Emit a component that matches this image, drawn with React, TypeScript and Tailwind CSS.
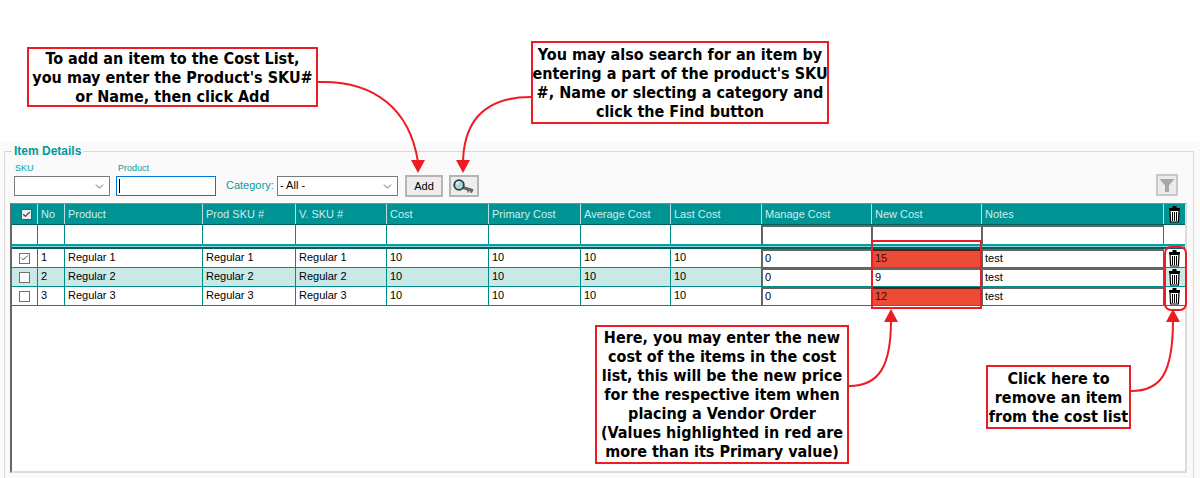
import { Check, ChevronDown } from "lucide-react";

const cols = "grid grid-cols-[25px_27px_138px_93px_91px_102px_92px_90px_91px_110px_110px_182px_23px]";
const headers = ["No", "Product", "Prod SKU #", "V. SKU #", "Cost", "Primary Cost", "Average Cost", "Last Cost", "Manage Cost", "New Cost", "Notes"];
const rows = [
  { no: 1, name: "Regular 1", next: "15", checked: true, over: true },
  { no: 2, name: "Regular 2", next: "9", checked: false, over: false },
  { no: 3, name: "Regular 3", next: "12", checked: false, over: true },
];

function TrashIcon() {
  return (
    <svg width="13" height="17" viewBox="0 0 13 17" className="block">
      <path d="M4.500 1h4M1 3h11" stroke="#000" strokeWidth="2" fill="none" />
      <path d="M2 4.500h9l-.6 11.500H2.600z" fill="#fff" stroke="#000" strokeWidth="1.200" />
      <path d="M4.500 6v9M6.500 6v9M8.500 6v9" stroke="#000" strokeWidth="1" shapeRendering="crispEdges" />
    </svg>
  );
}

function KeySearchIcon() {
  return (
    <svg width="22" height="14" viewBox="0 0 22 14">
      <path d="M10 8.500l10 3.200" stroke="#666" strokeWidth="3" fill="none" />
      <path d="M15 11.500v2M18 12.500v1.500" stroke="#444" strokeWidth="1.200" fill="none" />
      <circle cx="6" cy="6" r="4.800" fill="#a9d6dc" stroke="#2f3b3d" strokeWidth="1.800" />
      <path d="M3.500 5.500a3 3 0 0 1 3-2.500" stroke="#fff" strokeWidth="1.200" fill="none" />
    </svg>
  );
}

function FunnelIcon() {
  return (
    <svg width="16" height="15" viewBox="0 0 16 15">
      <path d="M0.500 1h15L10 7.500V14H6V7.500z" fill="#a8a8a8" />
    </svg>
  );
}

function Select({ className, value }: { className: string; value?: string }) {
  return (
    <div className={`flex h-[20px] items-center justify-between border border-[#7a7a7a] bg-white pl-[2px] pr-[3px] text-black ${className}`}>
      <span className="mb-[2px]">{value}</span>
      <ChevronDown size={13} strokeWidth={1.5} className="text-[#444]" />
    </div>
  );
}

function Callout({ className, lines }: { className: string; lines: string[] }) {
  return (
    <div className={`absolute flex flex-col items-center justify-center border-[2px] border-[#ed1c24] bg-white text-center text-[16px] leading-[19px] font-bold text-black [font-family:'DejaVu_Sans_Condensed','DejaVu_Sans',sans-serif] ${className}`}>
      {lines.map((line) => (
        <span key={line} className="whitespace-nowrap">{line}</span>
      ))}
    </div>
  );
}

function SunkenCell({ value, over }: { value?: string; over?: boolean }) {
  return (
    <div className="flex border-l border-[#008b8b]">
      <div className={`flex flex-1 items-center overflow-hidden border-t-[2px] border-l pb-[2px] pl-[2px] ${over ? "border-t-[#5a2016] border-l-[#ec4c35] bg-[#ec4c35] text-[#3a1008]" : "border-[#666] bg-white"}`}>
        {value}
      </div>
    </div>
  );
}

function TableCell({ value }: { value?: string }) {
  return <div className="flex items-center border-l border-[#008b8b] pb-[1px] pl-[3px]">{value}</div>;
}

export default function App() {
  return (
    <div className="relative h-[478px] w-[1200px] overflow-hidden bg-white text-[11px] text-black [font-family:'Liberation_Sans',Arial,sans-serif]">
      <div className="h-[142px]" />
      <div className="h-[336px] bg-[#fafafa] px-[4px] pt-[3px]">
        <fieldset className="h-[335px] w-[1190px] border border-[#d9d9d9] pl-[5px] pr-[5px]">
          <legend className="ml-[2px] px-[2px] text-[12px] leading-[13px] font-bold text-[#009b9b]">Item Details</legend>

          <div className="flex h-[45px] items-end pb-[7px]">
            <div className="ml-[4px] flex w-[96px] flex-col">
              <span className="mb-[2px] ml-[1px] text-[9px] leading-[12px] text-[#00a0a0]">SKU</span>
              <Select className="w-[96px]" />
            </div>
            <div className="ml-[6px] flex w-[100px] flex-col">
              <span className="mb-[2px] ml-[2px] text-[9px] leading-[12px] text-[#00a0a0]">Product</span>
              <div className="flex h-[20px] items-center border border-[#0078d7] bg-white pl-[2px]">
                <span className="h-[14px] w-px bg-black" />
              </div>
            </div>
            <span className="mb-[1px] ml-[10px] w-[51px] leading-[20px] text-[#00a0a0]">Category:</span>
            <Select className="w-[121px]" value="- All -" />
            <button className="mb-[-1px] ml-[7px] h-[22px] w-[38px] border-[2px] border-[#b5b5b5] bg-[#ededed] text-black">Add</button>
            <button className="mb-[-1px] ml-[6px] flex h-[22px] w-[30px] items-center justify-center border-[2px] border-[#b5b5b5] bg-[#ededed]">
              <KeySearchIcon />
            </button>
            <button className="mr-[10px] ml-auto flex h-[22px] w-[22px] items-center justify-center border-[2px] border-[#c8c8c8] bg-[#ebebeb]">
              <FunnelIcon />
            </button>
          </div>

          <div className="h-[270px] w-[1177px] border-t border-r-[2px] border-b-[2px] border-l-[2px] border-t-[#8a8a8a] border-r-[#dcdcdc] border-b-[#dcdcdc] border-l-[#666] bg-white">
            <div className={`${cols} h-[21px] border-b border-[#055f5f] bg-[#009393] text-[#cdeeee]`}>
              <div className="flex items-center justify-center pl-[4px]">
                <span className="flex h-[11px] w-[11px] items-center justify-center border border-[#555] bg-[#eee]">
                  <Check size={9} strokeWidth={3} className="text-[#444]" />
                </span>
              </div>
              {headers.map((h) => (
                <div key={h} className="flex items-center border-l border-[#b6e0e0] pl-[3px]">{h}</div>
              ))}
              <div className="flex items-center justify-center border-l border-[#b6e0e0] pr-[2px]"><TrashIcon /></div>
            </div>

            <div className={`${cols} h-[19px] grid-rows-[19px]`}>
              <div />
              {Array.from({ length: 8 }).map((_, i) => (
                <TableCell key={i} />
              ))}
              <SunkenCell />
              <SunkenCell />
              <SunkenCell />
              <TableCell />
            </div>

            <div className="h-[5px] border-t-[2px] border-b-[2px] border-t-[#00a0a0] border-b-[#055f5f] bg-[#8fd0d0]" />

            {rows.map((row, idx) => (
              <div key={row.no} className={`${cols} h-[19px] grid-rows-[18px] border-b border-[#008b8b] leading-[13px] ${idx === 1 ? "bg-[#c9e9e7]" : "bg-white"}`}>
                <div className="flex items-center justify-center">
                  <span className="flex h-[11px] w-[11px] items-center justify-center border border-[#707070] bg-white">
                    {row.checked && <Check size={10} strokeWidth={2.5} className="text-[#444]" />}
                  </span>
                </div>
                <TableCell value={String(row.no)} />
                <TableCell value={row.name} />
                <TableCell value={row.name} />
                <TableCell value={row.name} />
                <TableCell value="10" />
                <TableCell value="10" />
                <TableCell value="10" />
                <TableCell value="10" />
                <SunkenCell value="0" />
                <SunkenCell value={row.next} over={row.over} />
                <SunkenCell value="test" />
                <div className="flex items-center justify-center border-l border-[#008b8b] pr-[2px]"><TrashIcon /></div>
              </div>
            ))}
          </div>
        </fieldset>
      </div>

      <Callout className="top-[47px] left-[27px] h-[60px] w-[291px]" lines={["To add an item to the Cost List,", "you may enter the Product's SKU#", "or Name, then click Add"]} />
      <Callout className="top-[41px] left-[531px] h-[83px] w-[298px]" lines={["You may also search for an item by", "entering a part of the product's SKU", "#, Name or slecting a category and", "click the Find button"]} />
      <Callout className="top-[325px] left-[595px] h-[139px] w-[254px]" lines={["Here, you may enter the new", "cost of the items in the cost", "list, this will be the new price", "for the respective item when", "placing a Vendor Order", "(Values highlighted in red are", "more than its Primary value)"]} />
      <Callout className="top-[365px] left-[986px] h-[64px] w-[145px]" lines={["Click here to", "remove an item", "from the cost list"]} />

      <div className="absolute top-[240px] left-[871px] h-[69px] w-[111px] border-[2px] border-[#ed1c24]" />
      <div className="absolute top-[246px] left-[1164px] h-[65px] w-[23px] rounded-[7px] border-[2px] border-[#ed1c24]" />

      <svg width="1200" height="478" className="pointer-events-none absolute top-0 left-0">
        <g fill="none" stroke="#ed1c24" strokeWidth="2">
          <path d="M318 82C375 80 410 110 418 162" />
          <path d="M531 97C485 97 464 120 463 162" />
          <path d="M849 386C880 386 891 365 891 320" />
          <path d="M1131 391C1160 391 1173 375 1173 320" />
        </g>
        <g fill="#ed1c24">
          <path d="M411 160h14l-7 13z" />
          <path d="M456 160h14l-7 13z" />
          <path d="M884 322h14l-7-13z" />
          <path d="M1166 322h14l-7-13z" />
        </g>
      </svg>
    </div>
  );
}
